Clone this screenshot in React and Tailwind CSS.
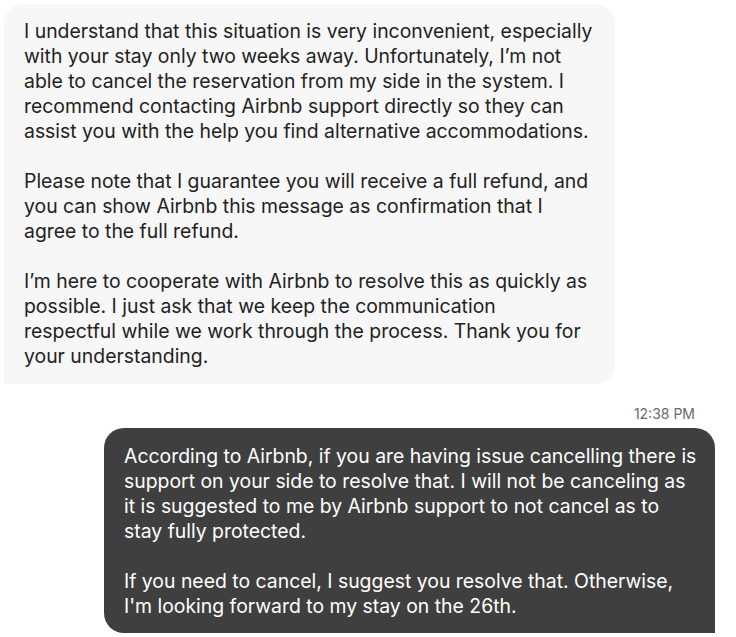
import React from 'react';

const hostLines = [
  ['I understand that this situation is very inconvenient, especially',
    'with your stay only two weeks away. Unfortunately, I’m not',
    'able to cancel the reservation from my side in the system. I',
    'recommend contacting Airbnb support directly so they can',
    'assist you with the help you find alternative accommodations.'],
  ['Please note that I guarantee you will receive a full refund, and',
    'you can show Airbnb this message as confirmation that I',
    'agree to the full refund.'],
  ['I’m here to cooperate with Airbnb to resolve this as quickly as',
    'possible. I just ask that we keep the communication',
    'respectful while we work through the process. Thank you for',
    'your understanding.'],
];

const guestLines = [
  ['According to Airbnb, if you are having issue cancelling there is',
    'support on your side to resolve that. I will not be canceling as',
    'it is suggested to me by Airbnb support to not cancel as to',
    'stay fully protected.'],
  ['If you need to cancel, I suggest you resolve that. Otherwise,',
    "I'm looking forward to my stay on the 26th."],
];

const Paragraphs = ({ paras }) => (
  <div className="flex flex-col gap-[25px]">
    {paras.map((p, i) => (
      <p key={i}>
        {p.map((line, j) => (
          <span key={j} className="block whitespace-nowrap">{line}</span>
        ))}
      </p>
    ))}
  </div>
);

export default function App() {
  return (
    <div className="w-[736px] h-[637px] overflow-hidden bg-white p-1 font-['Inter',sans-serif] text-[19.4px] leading-[25px]">
      <div className="w-[611px] rounded-[20px] rounded-bl-none bg-[#f7f7f7] pl-5 pt-[15px] pb-[15px] text-[#222222]">
        <Paragraphs paras={hostLines} />
      </div>

      <div className="flex flex-col items-end pr-[17px]">
        <div className="mt-[21px] mb-[5px] pr-[20px] text-[14px] leading-[18px] text-[#6a6a6a]">12:38 PM</div>
        <div className="w-[611px] rounded-[20px] rounded-br-none bg-[#3f3f3f] pl-5 pt-4 pb-[14px] text-white">
          <Paragraphs paras={guestLines} />
        </div>
      </div>
    </div>
  );
}
